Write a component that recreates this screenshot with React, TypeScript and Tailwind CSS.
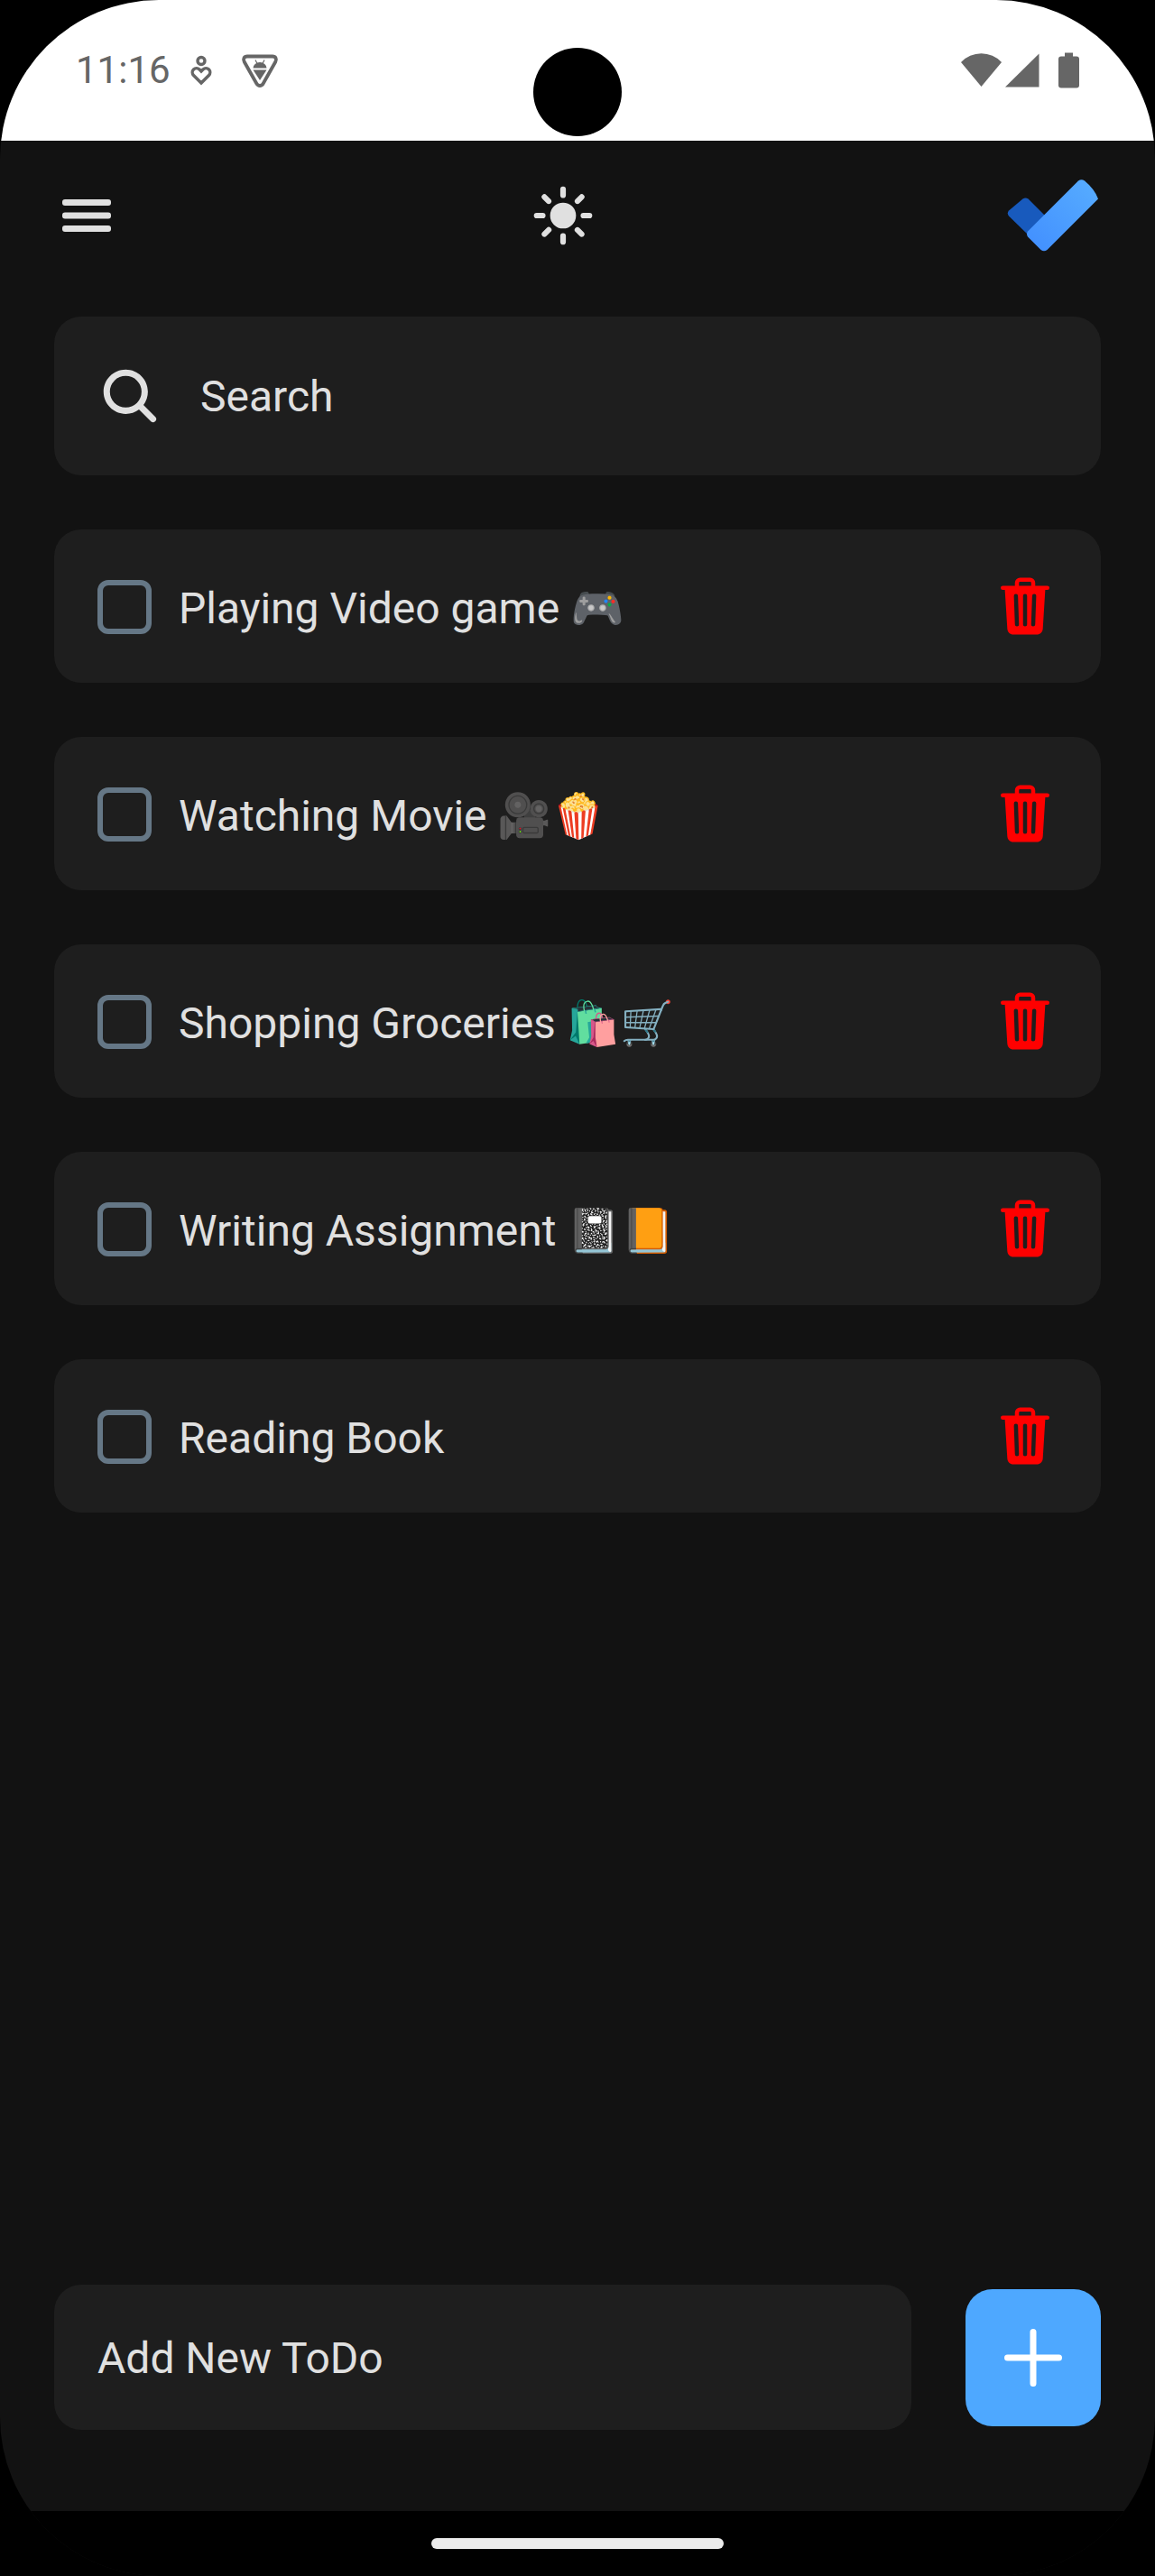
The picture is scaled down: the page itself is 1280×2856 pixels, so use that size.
import { useState } from "react";
import { IoSearch, IoSunny, IoTrash } from "react-icons/io5";

type Todo = { id: number; title: string; done: boolean };

const initialTodos: Todo[] = [
  { id: 1, title: "Playing Video game 🎮", done: false },
  { id: 2, title: "Watching Movie 🎥🍿", done: false },
  { id: 3, title: "Shopping Groceries 🛍️🛒", done: false },
  { id: 4, title: "Writing Assignment 📓📙", done: false },
  { id: 5, title: "Reading Book", done: false },
];

function StatusBar() {
  return (
    <div className="relative flex h-[156px] shrink-0 items-center justify-between bg-white px-[84px] text-[#666666]">
      <div className="flex items-center">
        <span className="w-[120px] text-[42px] leading-[48px]">11:16</span>
        <svg className="ml-[7px] h-[36px] w-[24px]" viewBox="0 0 24 36" fill="none" stroke="currentColor" strokeWidth="3.4" aria-hidden="true">
          <circle cx="12" cy="7.5" r="4" />
          <path d="M12 32 3.500 23.500a4.700 4.700 0 0 1 0-6.500 4.700 4.700 0 0 1 6.500 0l2 2 2-2a4.700 4.700 0 0 1 6.500 0 4.700 4.700 0 0 1 0 6.500z" />
        </svg>
        <svg className="ml-8 h-[40px] w-[42px]" viewBox="0 0 42 40" aria-hidden="true">
          <path d="M7 4.500h28c3.500 0 5 3 3.300 6L24.600 34.800c-1.700 2.900-5.500 2.900-7.200 0L3.700 10.500C2 7.500 3.500 4.500 7 4.500z" fill="none" stroke="currentColor" strokeWidth="3.800" />
          <path d="M13.500 17.500a7.500 6.500 0 0 1 15 0zM13.500 19.500h15L21 31z" fill="currentColor" />
          <path d="m16 8.500 2 4m8-4-2 4" stroke="currentColor" strokeWidth="1.200" />
        </svg>
      </div>
      <div className="absolute left-1/2 top-[53px] size-[98px] -translate-x-1/2 rounded-full bg-black" />
      <svg className="h-[40px] w-[132px]" viewBox="0 0 132 40" fill="currentColor" aria-hidden="true">
        <path d="M1 11a31 31 0 0 1 45 0L23.500 38z" />
        <path d="M87.500 1.500v37h-37.500z" />
        <path d="M116 0.500h9v4h4a3 3 0 0 1 3 3v29a3 3 0 0 1-3 3h-17a3 3 0 0 1-3-3v-29a3 3 0 0 1 3-3h4z" />
      </svg>
    </div>
  );
}

function Header() {
  return (
    <header className="flex h-[166px] items-center justify-between px-[60px]">
      <button type="button" aria-label="Menu" className="flex size-[72px] items-center justify-center">
        <svg className="h-[36px] w-[54px]" viewBox="0 0 54 36" fill="currentColor" aria-hidden="true">
          <rect width="54" height="7" rx="3" />
          <rect y="14.500" width="54" height="7" rx="3" />
          <rect y="29" width="54" height="7" rx="3" />
        </svg>
      </button>
      <button type="button" aria-label="Toggle theme">
        <IoSunny className="size-[72px]" />
      </button>
      <svg className="h-[80px] w-[104px]" viewBox="0 0 104 80" role="img" aria-label="ToDo logo">
        <defs>
          <linearGradient id="logo-blue" x1="30" y1="72" x2="92" y2="8" gradientUnits="userSpaceOnUse">
            <stop offset="0" stopColor="#4391ff" />
            <stop offset="1" stopColor="#55aaff" />
          </linearGradient>
        </defs>
        <path d="M17.500 21.500q3-2 6 0L44 42 24 62 2 40.500q-2.500-3 0-6z" fill="#185abd" />
        <path d="M79 1.500q3.500-2.500 7 0Q97 10.500 101 21.500L44.500 78q-3.500 2.500-7 0L23 63.500q-2-3 0-6z" fill="url(#logo-blue)" />
      </svg>
    </header>
  );
}

type TodoRowProps = { todo: Todo; onToggle: () => void; onDelete: () => void };

function TodoRow({ todo, onToggle, onDelete }: TodoRowProps) {
  return (
    <li className="flex h-[170px] items-center justify-between rounded-[30px] bg-[#1e1e1e] px-12">
      <label className="flex items-center gap-[30px] pt-0.5 text-[48px] leading-[56px]">
        <input
          type="checkbox"
          checked={todo.done}
          onChange={onToggle}
          className="size-[60px] shrink-0 appearance-none rounded-[12px] border-[6px] border-[#657786] checked:bg-[#657786]"
        />
        <span className="pt-1">{todo.title}</span>
      </label>
      <button type="button" aria-label={"Delete " + todo.title} onClick={onDelete} className="text-[#ff0000]">
        <IoTrash className="size-[72px]" />
      </button>
    </li>
  );
}

export default function App() {
  const [todos, setTodos] = useState(initialTodos);
  const [query, setQuery] = useState("");
  const [draft, setDraft] = useState("");

  const visible = todos.filter((t) => t.title.toLowerCase().includes(query.toLowerCase()));

  const addTodo = () => {
    if (!draft.trim()) return;
    setTodos([...todos, { id: Date.now(), title: draft.trim(), done: false }]);
    setDraft("");
  };

  return (
    <div className="min-h-screen bg-black">
      <div className="flex min-h-screen flex-col overflow-hidden rounded-[176px] bg-[#121212] font-[Roboto,'Noto_Color_Emoji',sans-serif] text-[#e0e0e0]">
        <StatusBar />
        <Header />
        <main className="mt-[29px] flex grow flex-col px-[60px]">
          <label className="flex h-[176px] items-center gap-[42px] rounded-[30px] bg-[#1e1e1e] px-12">
            <IoSearch className="size-[72px] shrink-0" aria-hidden="true" />
            <input
              type="text"
              aria-label="Search"
              placeholder="Search"
              value={query}
              onChange={(e) => setQuery(e.target.value)}
              className="min-w-0 grow bg-transparent pt-0.5 text-[48px] leading-[56px] outline-none placeholder:text-[#e0e0e0]"
            />
          </label>
          <ul className="mt-[60px] flex flex-col gap-[60px]">
            {visible.map((todo) => (
              <TodoRow
                key={todo.id}
                todo={todo}
                onToggle={() => setTodos(todos.map((t) => (t.id === todo.id ? { ...t, done: !t.done } : t)))}
                onDelete={() => setTodos(todos.filter((t) => t.id !== todo.id))}
              />
            ))}
          </ul>
          <form
            className="mb-[90px] mt-auto flex items-center gap-[60px] pt-[60px]"
            onSubmit={(e) => {
              e.preventDefault();
              addTodo();
            }}
          >
            <input
              type="text"
              aria-label="Add New ToDo"
              placeholder="Add New ToDo"
              value={draft}
              onChange={(e) => setDraft(e.target.value)}
              className="h-[161px] min-w-0 grow rounded-[30px] bg-[#1e1e1e] px-12 pt-0.5 text-[48px] leading-[56px] outline-none placeholder:text-[#e0e0e0]"
            />
            <button
              type="submit"
              aria-label="Add"
              className="flex h-[152px] w-[150px] shrink-0 items-center justify-center rounded-[30px] bg-[#4ea8ff] text-white"
            >
              <svg className="size-[64px]" viewBox="0 0 64 64" fill="none" stroke="currentColor" strokeWidth="7" strokeLinecap="round" aria-hidden="true">
                <path d="M32 3.500v57M3.500 32h57" />
              </svg>
            </button>
          </form>
        </main>
        <div className="flex h-[72px] shrink-0 items-center justify-center bg-black">
          <div className="h-[12px] w-[324px] rounded-full bg-[#ebebeb]" />
        </div>
      </div>
    </div>
  );
}
